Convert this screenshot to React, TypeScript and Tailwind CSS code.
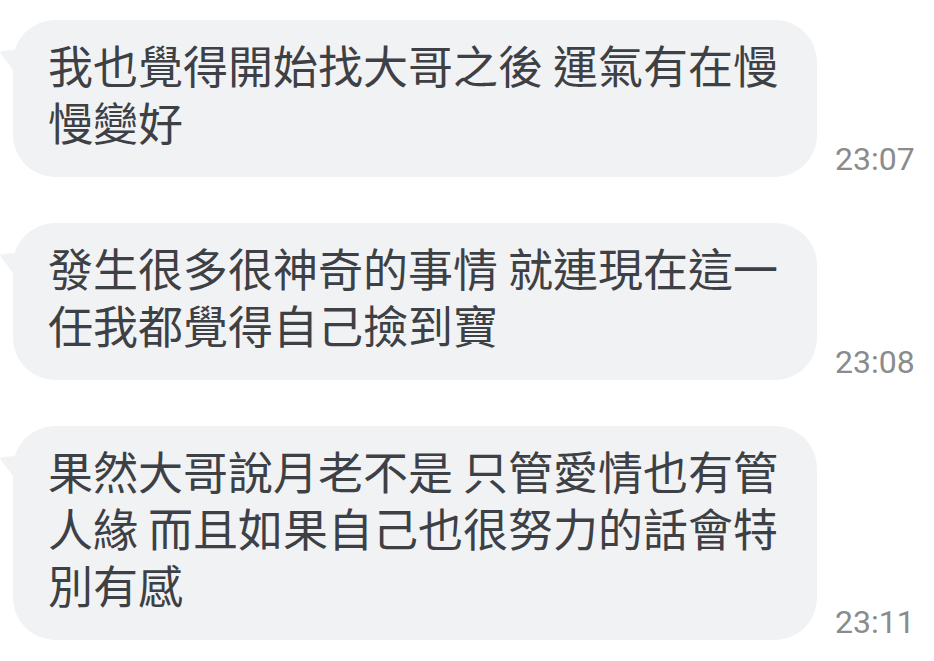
import { FC, Fragment } from 'react';

interface Message {
  id: number;
  lines: string[];
  time: string;
}

const messages: Message[] = [
  { id: 1, lines: ['我也覺得開始找大哥之後 運氣有在慢', '慢變好'], time: '23:07' },
  { id: 2, lines: ['發生很多很神奇的事情 就連現在這一', '任我都覺得自己撿到寶'], time: '23:08' },
  {
    id: 3,
    lines: ['果然大哥說月老不是 只管愛情也有管', '人緣 而且如果自己也很努力的話會特', '別有感'],
    time: '23:11',
  },
];

const Bubble: FC<{ message: Message }> = ({ message }) => {
  return (
    <div className="flex items-end">
      <div className="relative ml-[13px]">
        {/* little tail on the upper left */}
        <svg
          className="absolute left-[-13px] top-[29px]"
          width="16"
          height="26"
          viewBox="0 0 16 26"
        >
          <path d="M16 1 L2 2 Q-1 3 1 5 L16 25 Z" fill="#f1f2f4" />
        </svg>
        <div className="w-[804px] rounded-[42px] bg-[#f1f2f4] pl-[35px] pr-[30px] pt-[16px] pb-[27px]">
          <p className="whitespace-nowrap text-[45px] leading-[57px] text-[#3d4044] [font-family:'Noto_Sans_CJK_TC','Noto_Sans_CJK_SC',sans-serif]">
            {message.lines.map((line, i) => (
              <Fragment key={i}>
                {i > 0 && <br />}
                {line}
              </Fragment>
            ))}
          </p>
        </div>
      </div>
      <span className="ml-[18px] mb-[-1px] text-[32px] leading-[38px] text-[#8b8b8b] [font-family:Roboto,'Liberation_Sans',sans-serif]">
        {message.time}
      </span>
    </div>
  );
};

const App: FC = () => {
  return (
    <main className="min-h-screen w-[934px] bg-white pt-[20px] flex flex-col gap-[46px]">
      {messages.map((m) => (
        <Bubble key={m.id} message={m} />
      ))}
    </main>
  );
};

export default App;
